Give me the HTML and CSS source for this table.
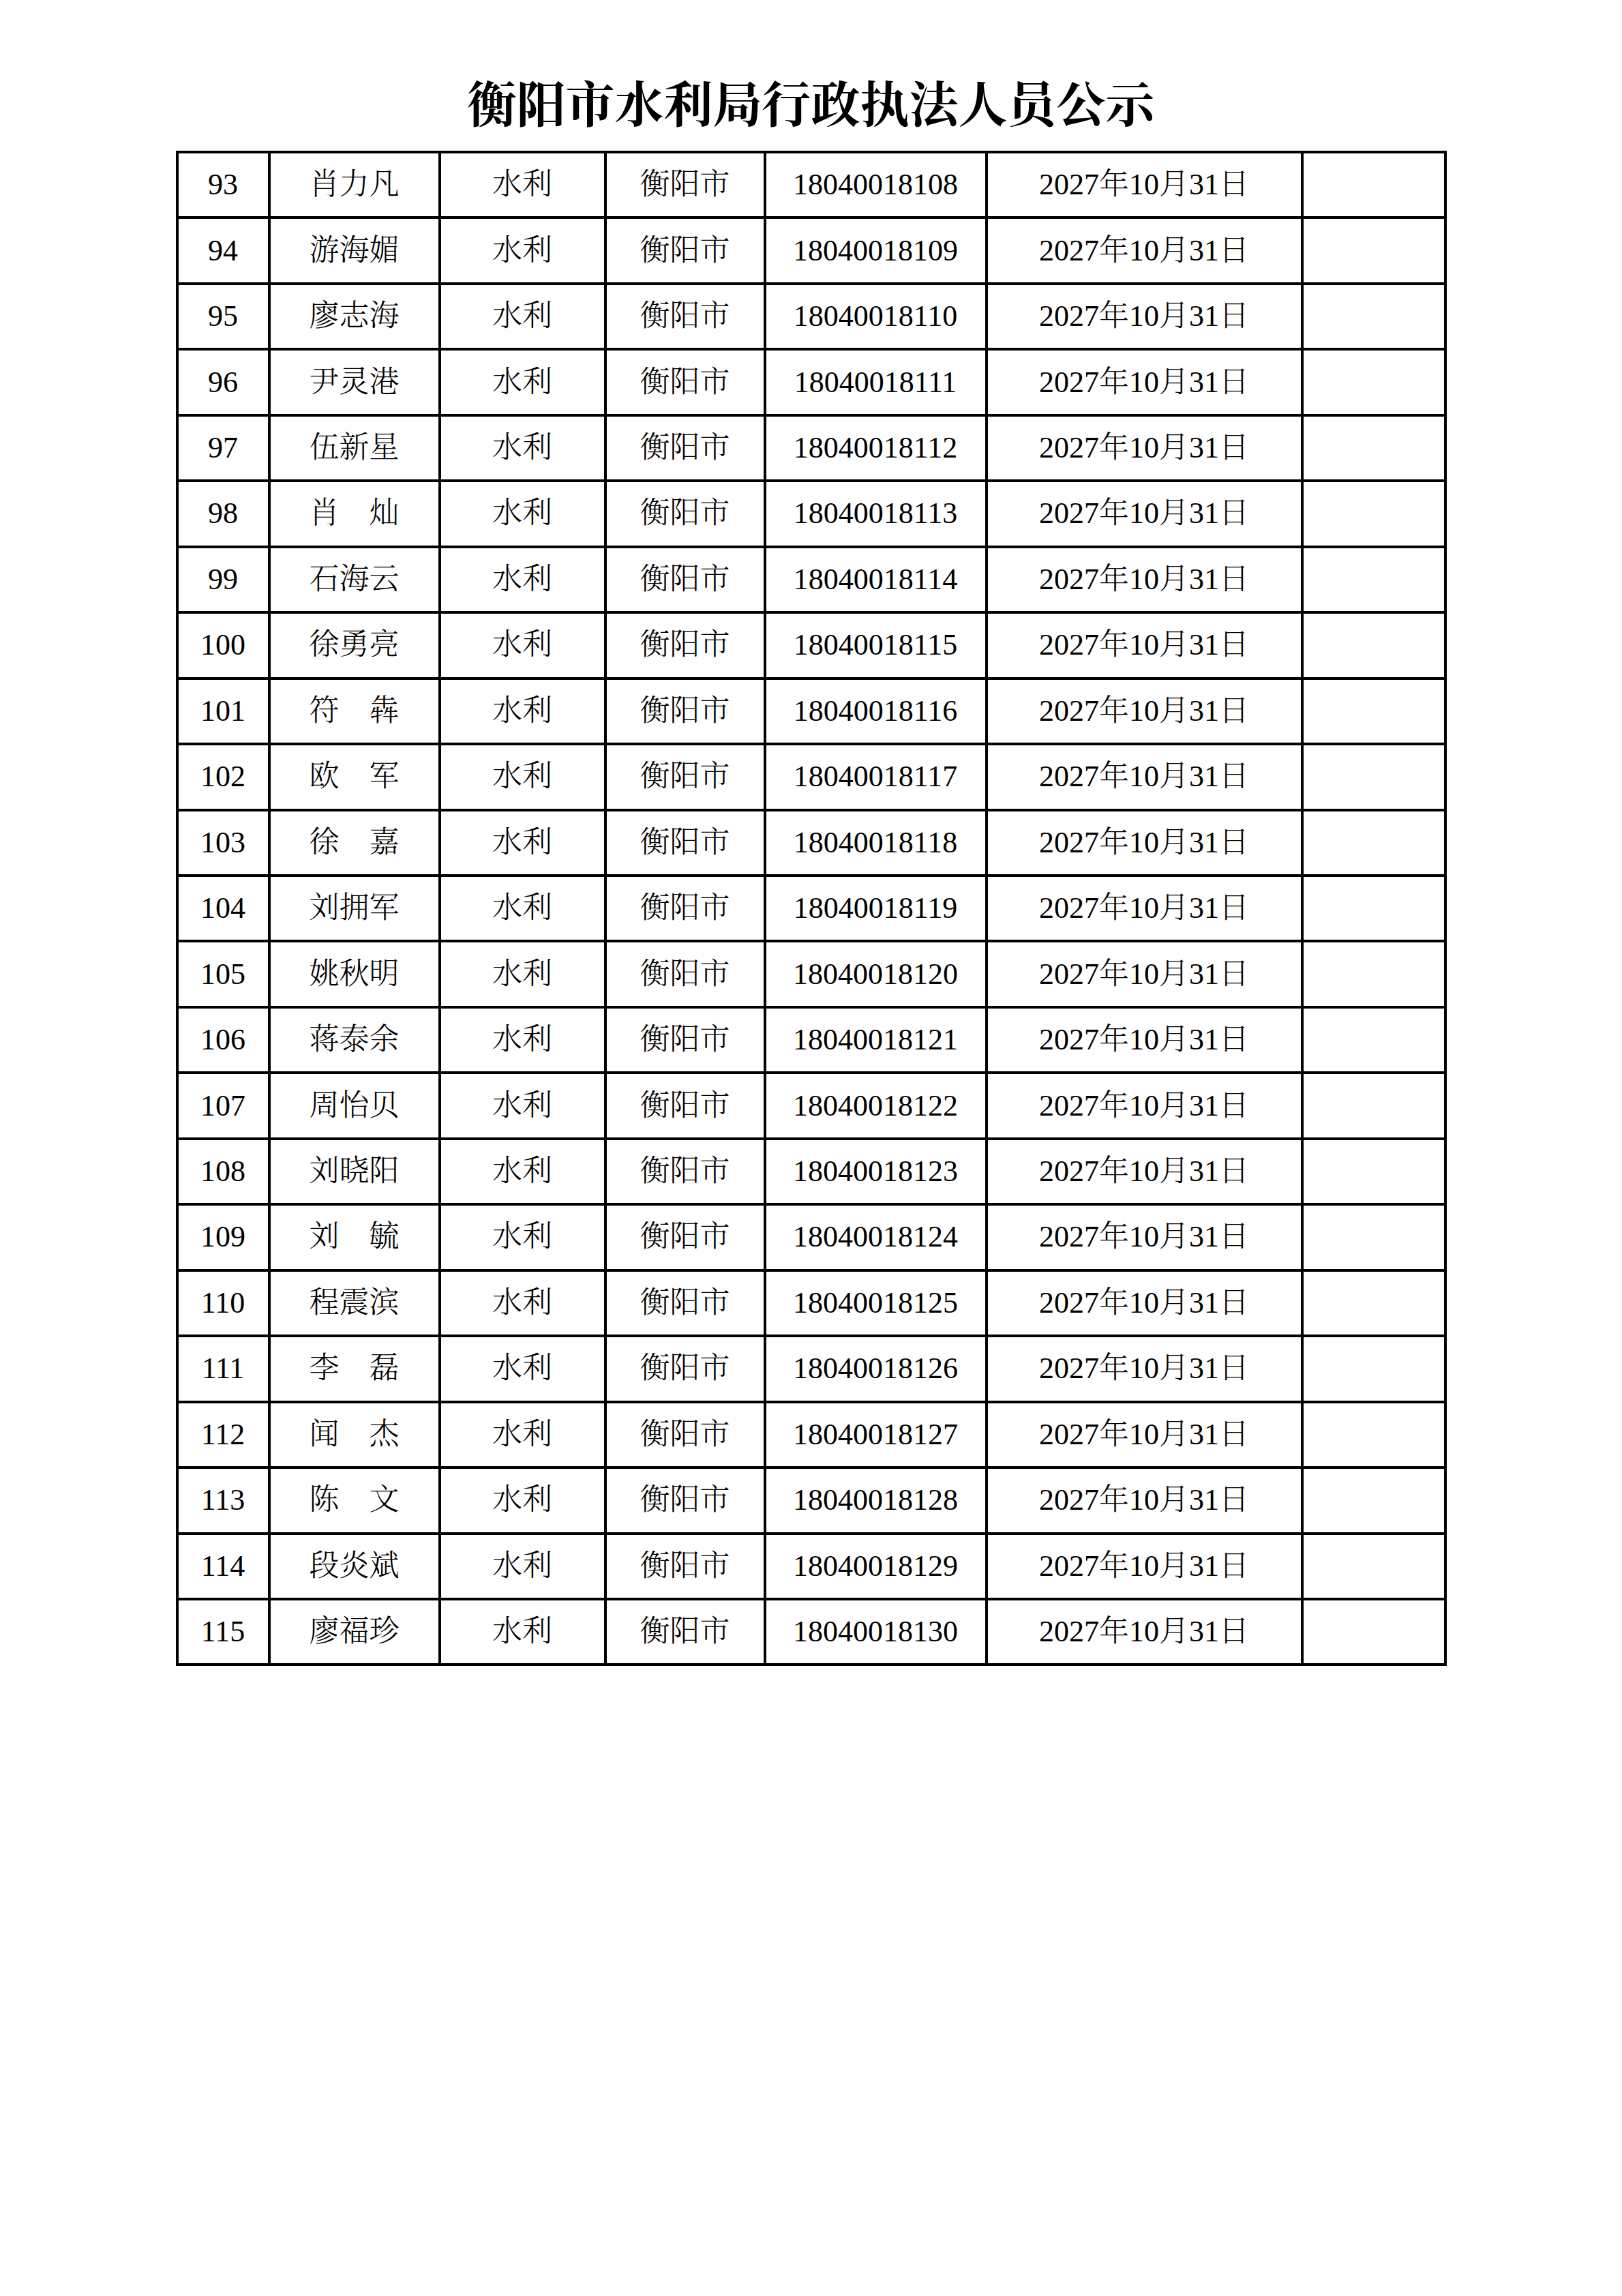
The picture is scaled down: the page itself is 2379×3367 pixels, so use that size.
FILE: index.html
```html
<!DOCTYPE html>
<html lang="zh-CN">
<head>
<meta charset="utf-8">
<title>衡阳市水利局行政执法人员公示</title>
<link rel="stylesheet" href="styles.css">
</head>
<body>
<div class="page">
  <h1 class="title">衡阳市水利局行政执法人员公示</h1>
  <div class="roster">
    <div class="row"><div class="cell">93</div><div class="cell">肖力凡</div><div class="cell">水利</div><div class="cell">衡阳市</div><div class="cell">18040018108</div><div class="cell">2027年10月31日</div><div class="cell"></div></div>
    <div class="row"><div class="cell">94</div><div class="cell">游海媚</div><div class="cell">水利</div><div class="cell">衡阳市</div><div class="cell">18040018109</div><div class="cell">2027年10月31日</div><div class="cell"></div></div>
    <div class="row"><div class="cell">95</div><div class="cell">廖志海</div><div class="cell">水利</div><div class="cell">衡阳市</div><div class="cell">18040018110</div><div class="cell">2027年10月31日</div><div class="cell"></div></div>
    <div class="row"><div class="cell">96</div><div class="cell">尹灵港</div><div class="cell">水利</div><div class="cell">衡阳市</div><div class="cell">18040018111</div><div class="cell">2027年10月31日</div><div class="cell"></div></div>
    <div class="row"><div class="cell">97</div><div class="cell">伍新星</div><div class="cell">水利</div><div class="cell">衡阳市</div><div class="cell">18040018112</div><div class="cell">2027年10月31日</div><div class="cell"></div></div>
    <div class="row"><div class="cell">98</div><div class="cell">肖　灿</div><div class="cell">水利</div><div class="cell">衡阳市</div><div class="cell">18040018113</div><div class="cell">2027年10月31日</div><div class="cell"></div></div>
    <div class="row"><div class="cell">99</div><div class="cell">石海云</div><div class="cell">水利</div><div class="cell">衡阳市</div><div class="cell">18040018114</div><div class="cell">2027年10月31日</div><div class="cell"></div></div>
    <div class="row"><div class="cell">100</div><div class="cell">徐勇亮</div><div class="cell">水利</div><div class="cell">衡阳市</div><div class="cell">18040018115</div><div class="cell">2027年10月31日</div><div class="cell"></div></div>
    <div class="row"><div class="cell">101</div><div class="cell">符　犇</div><div class="cell">水利</div><div class="cell">衡阳市</div><div class="cell">18040018116</div><div class="cell">2027年10月31日</div><div class="cell"></div></div>
    <div class="row"><div class="cell">102</div><div class="cell">欧　军</div><div class="cell">水利</div><div class="cell">衡阳市</div><div class="cell">18040018117</div><div class="cell">2027年10月31日</div><div class="cell"></div></div>
    <div class="row"><div class="cell">103</div><div class="cell">徐　嘉</div><div class="cell">水利</div><div class="cell">衡阳市</div><div class="cell">18040018118</div><div class="cell">2027年10月31日</div><div class="cell"></div></div>
    <div class="row"><div class="cell">104</div><div class="cell">刘拥军</div><div class="cell">水利</div><div class="cell">衡阳市</div><div class="cell">18040018119</div><div class="cell">2027年10月31日</div><div class="cell"></div></div>
    <div class="row"><div class="cell">105</div><div class="cell">姚秋明</div><div class="cell">水利</div><div class="cell">衡阳市</div><div class="cell">18040018120</div><div class="cell">2027年10月31日</div><div class="cell"></div></div>
    <div class="row"><div class="cell">106</div><div class="cell">蒋泰余</div><div class="cell">水利</div><div class="cell">衡阳市</div><div class="cell">18040018121</div><div class="cell">2027年10月31日</div><div class="cell"></div></div>
    <div class="row"><div class="cell">107</div><div class="cell">周怡贝</div><div class="cell">水利</div><div class="cell">衡阳市</div><div class="cell">18040018122</div><div class="cell">2027年10月31日</div><div class="cell"></div></div>
    <div class="row"><div class="cell">108</div><div class="cell">刘晓阳</div><div class="cell">水利</div><div class="cell">衡阳市</div><div class="cell">18040018123</div><div class="cell">2027年10月31日</div><div class="cell"></div></div>
    <div class="row"><div class="cell">109</div><div class="cell">刘　毓</div><div class="cell">水利</div><div class="cell">衡阳市</div><div class="cell">18040018124</div><div class="cell">2027年10月31日</div><div class="cell"></div></div>
    <div class="row"><div class="cell">110</div><div class="cell">程震滨</div><div class="cell">水利</div><div class="cell">衡阳市</div><div class="cell">18040018125</div><div class="cell">2027年10月31日</div><div class="cell"></div></div>
    <div class="row"><div class="cell">111</div><div class="cell">李　磊</div><div class="cell">水利</div><div class="cell">衡阳市</div><div class="cell">18040018126</div><div class="cell">2027年10月31日</div><div class="cell"></div></div>
    <div class="row"><div class="cell">112</div><div class="cell">闻　杰</div><div class="cell">水利</div><div class="cell">衡阳市</div><div class="cell">18040018127</div><div class="cell">2027年10月31日</div><div class="cell"></div></div>
    <div class="row"><div class="cell">113</div><div class="cell">陈　文</div><div class="cell">水利</div><div class="cell">衡阳市</div><div class="cell">18040018128</div><div class="cell">2027年10月31日</div><div class="cell"></div></div>
    <div class="row"><div class="cell">114</div><div class="cell">段炎斌</div><div class="cell">水利</div><div class="cell">衡阳市</div><div class="cell">18040018129</div><div class="cell">2027年10月31日</div><div class="cell"></div></div>
    <div class="row"><div class="cell">115</div><div class="cell">廖福珍</div><div class="cell">水利</div><div class="cell">衡阳市</div><div class="cell">18040018130</div><div class="cell">2027年10月31日</div><div class="cell"></div></div>
  </div>
</div>
</body>
</html>
```
FILE: styles.css
```css
html, body {
  margin: 0;
  padding: 0;
  background: #fff;
  color: #000;
}

.page {
  width: 2379px;
  padding-top: 112px;
}

.title {
  margin: 0;
  height: 72px;
  text-align: center;
  font-family: "Noto Serif CJK SC", "Noto Sans CJK SC", serif;
  font-weight: 700;
  font-size: 72px;
  line-height: 72px;
}

.roster {
  box-sizing: border-box;
  width: 1864px;
  margin: 37px auto 0;
  padding: 4px;
  gap: 4px;
  background: #000;
  display: grid;
  grid-template-columns: 131px 246px 239px 230px 321px 459px 206px;
  grid-auto-rows: 92.46px;
}

.row {
  display: contents;
}

.cell {
  background: #fff;
  display: flex;
  align-items: center;
  justify-content: center;
  white-space: nowrap;
  font-family: "Liberation Serif", "Noto Serif CJK SC", "Noto Sans CJK SC", serif;
  font-weight: 300;
  font-size: 44px;
  line-height: 44px;
}
```
